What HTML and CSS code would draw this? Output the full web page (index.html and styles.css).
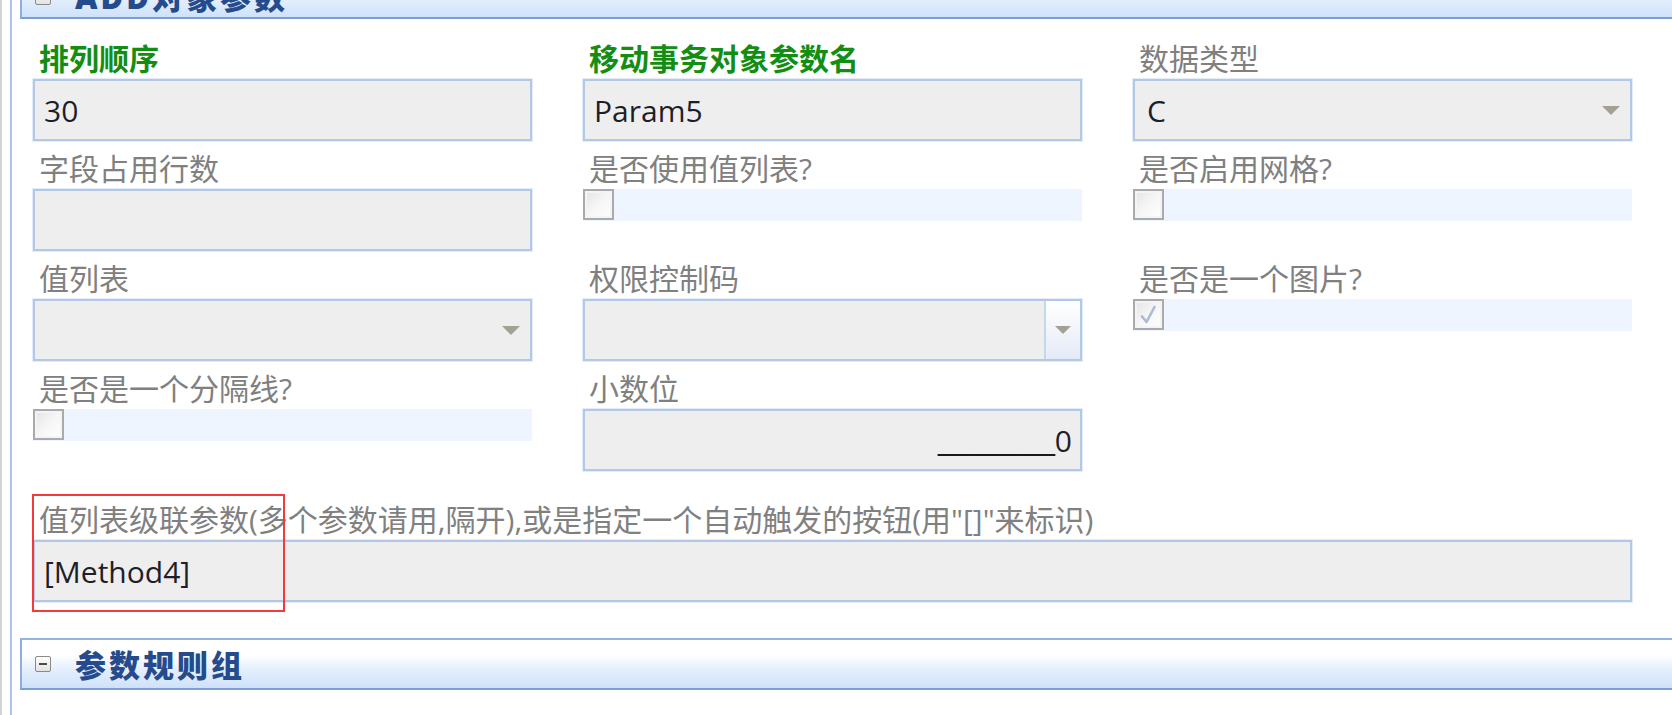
FILE: index.html
```html
<!DOCTYPE html>
<html lang="zh-CN">
<head>
<meta charset="utf-8">
<title>对象参数</title>
<link rel="stylesheet" href="styles.css">
</head>
<body>
<div class="frame">
  <div class="panel">
    <div class="section-head top">
      <span class="toggle"><span class="minus"></span></span>
      <span class="title">ADD对象参数</span>
    </div>

    <div class="fields">
      <div class="field">
        <div class="label key">排列顺序</div>
        <div class="box">30</div>
      </div>
      <div class="field">
        <div class="label key">移动事务对象参数名</div>
        <div class="box">Param5</div>
      </div>
      <div class="field">
        <div class="label">数据类型</div>
        <div class="box select"><span class="value">C</span><span class="arrow"></span></div>
      </div>

      <div class="field">
        <div class="label">字段占用行数</div>
        <div class="box"></div>
      </div>
      <div class="field">
        <div class="label">是否使用值列表?</div>
        <div class="check-row"><span class="check"></span></div>
      </div>
      <div class="field">
        <div class="label">是否启用网格?</div>
        <div class="check-row"><span class="check"></span></div>
      </div>

      <div class="field">
        <div class="label">值列表</div>
        <div class="box select"><span class="value"></span><span class="arrow"></span></div>
      </div>
      <div class="field">
        <div class="label">权限控制码</div>
        <div class="box combo"><span class="value"></span><span class="btn"><span class="arrow"></span></span></div>
      </div>
      <div class="field">
        <div class="label">是否是一个图片?</div>
        <div class="check-row">
          <span class="check checked">
            <svg viewBox="0 0 27 27" width="27" height="27"><path d="M7 15.5 L11.5 21 L19.5 6" fill="none" stroke="#a9bcd6" stroke-width="2.6" stroke-linecap="round" stroke-linejoin="round"/></svg>
          </span>
        </div>
      </div>

      <div class="field">
        <div class="label">是否是一个分隔线?</div>
        <div class="check-row"><span class="check"></span></div>
      </div>
      <div class="field">
        <div class="label">小数位</div>
        <div class="box num"><span class="mask">_______</span>0</div>
      </div>

      <div class="field wide">
        <div class="label">值列表级联参数(多个参数请用,隔开),或是指定一个自动触发的按钮(用"[]"来标识)</div>
        <div class="box">[Method4]</div>
        <div class="annotation"></div>
      </div>
    </div>

    <div class="section-head bottom">
      <span class="toggle"><span class="minus"></span></span>
      <span class="title">参数规则组</span>
    </div>
  </div>
</div>
</body>
</html>
```

FILE: styles.css
```css
html, body {
  margin: 0;
  padding: 0;
  background: #ffffff;
  overflow: hidden;
}

body {
  font-family: "Open Sans", "Noto Sans CJK SC", sans-serif;
  width: 1672px;
  height: 715px;
}

.frame {
  display: flow-root;
  height: 715px;
  box-sizing: border-box;
  border-left: 2px solid #d3d3d3;
  padding-left: 8px;
}

.panel {
  display: flow-root;
  height: 100%;
  width: 1720px;
  box-sizing: border-box;
  border-left: 2px solid #aac5ea;
  padding-left: 8px;
}

/* section headers */
.section-head {
  height: 52px;
  box-sizing: border-box;
  display: flex;
  align-items: center;
  padding-left: 13px;
  border-top: 2px solid #93b3e0;
  border-bottom: 2px solid #7c9fd3;
  border-left: 2px solid #8eaedc;
  background: linear-gradient(to bottom, #ffffff 0%, #ffffff 30%, #e4effd 62%, #cfe1fa 100%);
}

.section-head.top {
  margin-top: -33px;
  padding-top: 8px;
}

.section-head.bottom {
  margin-top: 36px;
}

.toggle {
  width: 16px;
  height: 16px;
  box-sizing: border-box;
  border: 1px solid #8a8a8a;
  border-radius: 2px;
  background: linear-gradient(to bottom, #ffffff, #e2e2e2);
  display: flex;
  align-items: center;
  justify-content: center;
}

.minus {
  width: 8px;
  height: 2px;
  background: #4a4a4a;
}

.title {
  margin-left: 24px;
  font-family: "Noto Sans CJK SC", sans-serif;
  font-weight: 900;
  font-size: 31px;
  letter-spacing: 3px;
  color: #254b8d;
  line-height: 40px;
}

.section-head.top .title {
  font-family: "Open Sans", "Noto Sans CJK SC", sans-serif;
}

/* form grid */
.fields {
  display: grid;
  grid-template-columns: 499px 499px 499px;
  column-gap: 51px;
  row-gap: 8px;
  padding: 20px 0 0 13px;
  align-items: start;
}

.field {
  display: flex;
  flex-direction: column;
  min-width: 0;
}

.field.wide {
  grid-column: 1 / -1;
  margin-top: 21px;
  position: relative;
}

.label {
  height: 40px;
  line-height: 40px;
  padding-left: 6px;
  font-size: 30px;
  color: #808080;
  white-space: nowrap;
}

.label.key {
  color: #138e13;
  font-weight: 700;
}

.box {
  height: 62px;
  box-sizing: border-box;
  border: 2px solid #b2c8e6;
  box-shadow: 0 0 0 1px #e3ecf7;
  background: #eeeeee;
  display: flex;
  align-items: center;
  padding: 0 13px 0 9px;
  font-size: 30px;
  color: #1e1e28;
  white-space: nowrap;
}

.box .value {
  flex: 1;
}

.box.select {
  padding-left: 12px;
  padding-right: 10px;
}

.arrow {
  width: 0;
  height: 0;
  border-left: 9px solid transparent;
  border-right: 9px solid transparent;
  border-top: 9px solid #a3a192;
}

.box.combo {
  padding-right: 0;
}

.btn {
  width: 34px;
  align-self: stretch;
  border-left: 2px solid #c6d6ec;
  background: linear-gradient(to bottom, #ffffff 0%, #f2f5fa 50%, #e4ebf6 100%);
  display: flex;
  align-items: center;
  justify-content: center;
}

.btn .arrow {
  border-left-width: 8px;
  border-right-width: 8px;
  border-top-width: 8px;
}

.box.num {
  justify-content: flex-end;
  padding-right: 8px;
}

.mask {
  font-family: "Liberation Sans", sans-serif;
  color: #1a1a1a;
}

/* checkboxes */
.check-row {
  height: 32px;
  background: #eef5fe;
  display: flex;
  align-items: flex-start;
}

.check {
  width: 31px;
  height: 31px;
  box-sizing: border-box;
  border: 2px solid #aaaaaa;
  background: linear-gradient(135deg, #e3e3e3 0%, #f6f6f6 50%, #ffffff 100%);
  box-shadow: inset 0 0 0 2px #f4f4f4;
  display: flex;
  align-items: center;
  justify-content: center;
}

.check svg {
  display: block;
}

/* red annotation frame */
.annotation {
  position: absolute;
  left: -1px;
  top: -6px;
  width: 253px;
  height: 118px;
  box-sizing: border-box;
  border: 2px solid #f23a3a;
  pointer-events: none;
}
```
